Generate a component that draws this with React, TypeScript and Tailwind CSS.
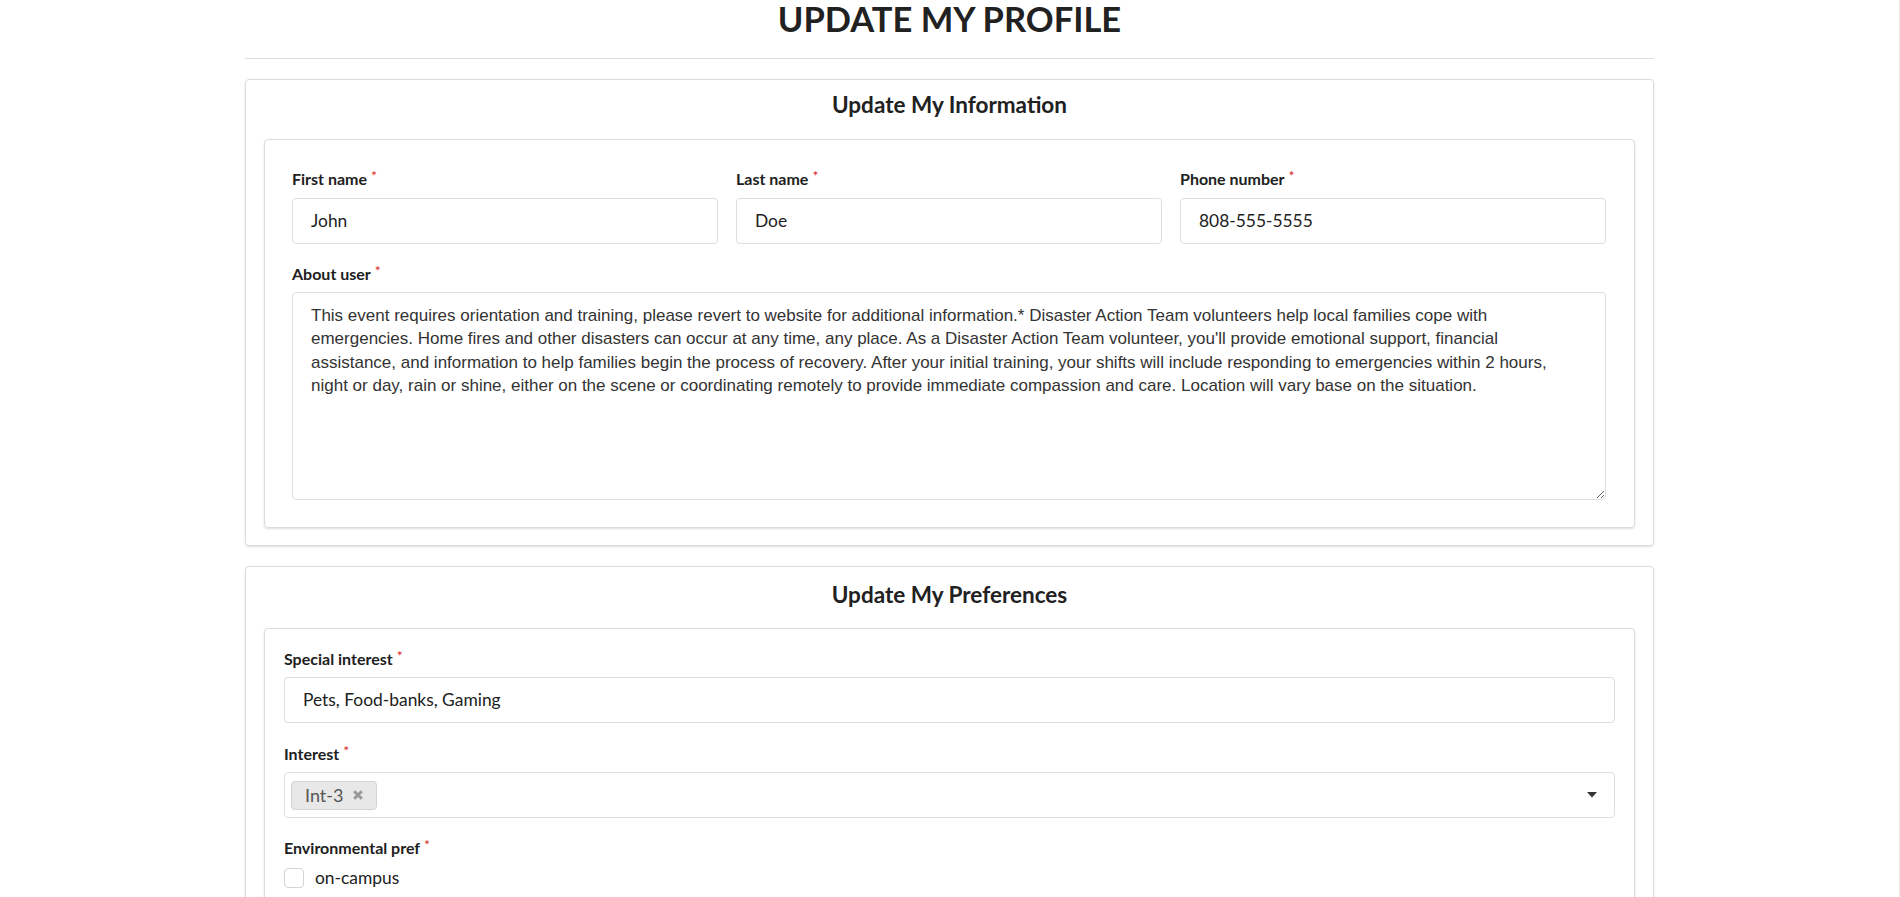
import React from "react";

const ABOUT =
  "This event requires orientation and training, please revert to website for additional information.* Disaster Action Team volunteers help local families cope with emergencies. Home fires and other disasters can occur at any time, any place. As a Disaster Action Team volunteer, you'll provide emotional support, financial assistance, and information to help families begin the process of recovery. After your initial training, your shifts will include responding to emergencies within 2 hours, night or day, rain or shine, either on the scene or coordinating remotely to provide immediate compassion and care. Location will vary base on the situation.";

function Label({ children }: { children: React.ReactNode }) {
  return (
    <div className="flex items-start text-[16px] leading-[18px] font-bold text-[#212121]">
      <span>{children}</span>
      <span className="ml-[4px] -mt-[1px] text-[14px] leading-[14px] font-normal text-[#db2828]">*</span>
    </div>
  );
}

function TextInput({ value }: { value: string }) {
  return (
    <div className="mt-[10px] h-[46px] flex items-center px-[18px] rounded-[4px] border border-[#dedede] bg-white text-[17.4px] text-[#212121]">
      {value}
    </div>
  );
}

function Check({ label }: { label: string }) {
  return (
    <div className="flex items-center gap-[11px] h-[20px] mb-[10px]">
      <span className="w-[20px] h-[20px] rounded-[4px] border border-[#d4d4d5] bg-white" />
      <span className="text-[17.4px] text-[#212121]">{label}</span>
    </div>
  );
}

export default function App() {
  return (
    <div
      className="min-h-screen bg-white border-r border-[#ececec]"
      style={{ fontFamily: "Lato, 'Noto Sans', sans-serif" }}
    >
      <div className="w-[1409px] mx-auto">
        <h1 className="text-[34.5px] leading-[38px] font-bold text-center text-[#212121]">
          UPDATE MY PROFILE
        </h1>
        <div className="mt-[20px] border-t border-[#dedede]" />

        {/* Card 1 */}
        <div className="mt-[20px] rounded-[4px] border border-[#dcdcdd] shadow-[0_1px_2px_0_rgba(34,36,38,0.15)] px-[18px] pt-[11px] pb-[17px]">
          <h2 className="text-[22.5px] leading-[27px] font-bold text-center text-[#212121]">
            Update My Information
          </h2>
          <div className="mt-[21px] rounded-[4px] border border-[#dcdcdd] shadow-[0_1px_2px_0_rgba(34,36,38,0.15)] pl-[27px] pr-[28px] pt-[30px] pb-[27px]">
            <div className="grid grid-cols-3 gap-x-[18px]">
              <div>
                <Label>First name</Label>
                <TextInput value="John" />
              </div>
              <div>
                <Label>Last name</Label>
                <TextInput value="Doe" />
              </div>
              <div>
                <Label>Phone number</Label>
                <TextInput value="808-555-5555" />
              </div>
            </div>
            <div className="mt-[21px]">
              <Label>About user</Label>
              <textarea
                readOnly
                defaultValue={ABOUT}
                className="mt-[9px] block w-full h-[208px] rounded-[4px] border border-[#dedede] bg-white pt-[11px] px-[18px] text-[17px] text-[#333] outline-none resize-y"
                style={{ fontFamily: "'Liberation Sans', Arial, sans-serif", lineHeight: "23.4px" }}
              />
            </div>
          </div>
        </div>

        {/* Card 2 */}
        <div className="mt-[20px] rounded-[4px] border border-[#dcdcdd] shadow-[0_1px_2px_0_rgba(34,36,38,0.15)] px-[18px] pt-[14px] pb-[17px]">
          <h2 className="text-[22.5px] leading-[27px] font-bold text-center text-[#212121]">
            Update My Preferences
          </h2>
          <div className="mt-[20px] rounded-[4px] border border-[#dcdcdd] shadow-[0_1px_2px_0_rgba(34,36,38,0.15)] px-[19px] pt-[21px] pb-[27px]">
            <div>
              <Label>Special interest</Label>
              <div className="mt-[9px] h-[46px] flex items-center px-[18px] rounded-[4px] border border-[#dedede] bg-white text-[17.4px] text-[#212121]">
                Pets, Food-banks, Gaming
              </div>
            </div>
            <div className="mt-[22px]">
              <Label>Interest</Label>
              <div className="mt-[9px] h-[46px] flex items-center justify-between pl-[6px] pr-[17px] rounded-[4px] border border-[#dedede] bg-white">
                <span className="h-[29px] flex items-center gap-[9px] pl-[13px] pr-[12px] rounded-[4px] bg-[#e8e8e8] border border-[#d4d4d5] text-[18px] text-[#555]">
                  Int-3
                  <svg width="12" height="12" viewBox="0 0 12 12" aria-hidden>
                    <path d="M2.2 2.2 L9.8 9.8 M9.8 2.2 L2.2 9.8" stroke="#999" strokeWidth="3" strokeLinecap="butt" />
                  </svg>
                </span>
                <svg width="10" height="6" viewBox="0 0 10 6" aria-hidden>
                  <path d="M0 0 H10 L5 5.5 Z" fill="#333" />
                </svg>
              </div>
            </div>
            <div className="mt-[21px]">
              <Label>Environmental pref</Label>
              <div className="mt-[11px]">
                <Check label="on-campus" />
                <Check label="off-campus" />
                <Check label="remote" />
              </div>
            </div>
          </div>
        </div>
        <div className="h-[40px]" />
      </div>
    </div>
  );
}
